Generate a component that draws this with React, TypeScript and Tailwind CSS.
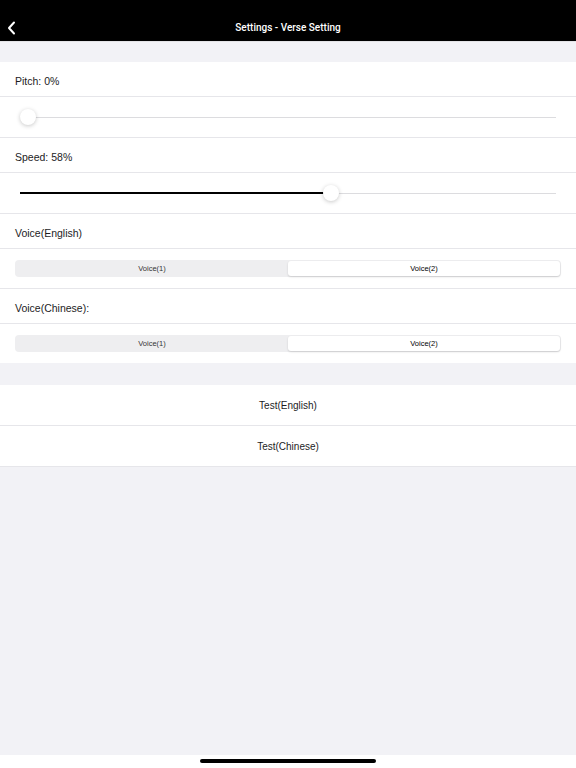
const font = { fontFamily: '"Liberation Sans", Arial, sans-serif' };

const Divider = () => <div className="h-px bg-[#e6e6ea]" />;

const LabelRow = ({ text }: { text: string }) => (
  <div className="flex h-[34px] items-center px-[15px] pt-[6px] text-[10.5px] text-[#1c1c1e]">{text}</div>
);

const SliderRow = ({ value }: { value: number }) => (
  <div className="flex h-[40px] items-center px-[20px]">
    <div className="relative h-[16px] w-full">
      <div className="absolute left-0 right-0 top-[7.5px] h-px bg-[#dcdcdf]" />
      <div className="absolute left-0 top-[7px] h-[2px] bg-black" style={{ width: `${value}%` }} />
      <div
        className="absolute top-0 h-[16px] w-[16px] -translate-x-1/2 rounded-full bg-white shadow-[0_1px_4px_rgba(0,0,0,0.22)]"
        style={{ left: `${value}%`, marginLeft: value === 0 ? 8 : 0 }}
      />
    </div>
  </div>
);

const Segmented = () => (
  <div className="flex h-[39px] items-center px-[15px]">
    <div className="flex h-[17px] w-full rounded-[4px] bg-[#eeeef0] p-px">
      <div className="flex flex-1 items-center justify-center text-[7.5px] text-[#333]">Voice(1)</div>
      <div className="flex flex-1 items-center justify-center rounded-[3px] bg-white text-[7.5px] text-black shadow-[0_1px_2px_rgba(0,0,0,0.15)]">
        Voice(2)
      </div>
    </div>
  </div>
);

const ButtonRow = ({ text }: { text: string }) => (
  <div className="flex h-[40px] items-center justify-center bg-white text-[10px] text-[#1c1c1e]">{text}</div>
);

export default function App() {
  return (
    <div className="flex h-[768px] w-[576px] flex-col bg-[#f2f2f6]" style={font}>
      <div className="relative flex h-[41px] items-center justify-center bg-black">
        <svg className="absolute left-[7px] top-[21px]" width="9" height="14" viewBox="0 0 9 14">
          <path d="M7 1.5 L2 7 L7 12.5" fill="none" stroke="white" strokeWidth="2" strokeLinecap="round" strokeLinejoin="round" />
        </svg>
        <span className="mt-[14px] font-['Roboto',sans-serif] text-[10px] font-medium text-white">
          Settings - Verse Setting
        </span>
      </div>
      <div className="h-[21px] border-t border-[#e3e3e6]" />
      <div className="bg-white">
        <LabelRow text="Pitch: 0%" />
        <Divider />
        <SliderRow value={0} />
        <Divider />
        <LabelRow text="Speed: 58%" />
        <Divider />
        <SliderRow value={58} />
        <Divider />
        <LabelRow text="Voice(English)" />
        <Divider />
        <Segmented />
        <Divider />
        <LabelRow text="Voice(Chinese):" />
        <Divider />
        <Segmented />
      </div>
      <div className="h-[22px]" />
      <ButtonRow text="Test(English)" />
      <Divider />
      <ButtonRow text="Test(Chinese)" />
      <Divider />
      <div className="flex-1" />
      <div className="flex h-[13px] items-start justify-center bg-white pt-[4px]">
        <div className="h-[4px] w-[176px] rounded-full bg-black" />
      </div>
    </div>
  );
}
